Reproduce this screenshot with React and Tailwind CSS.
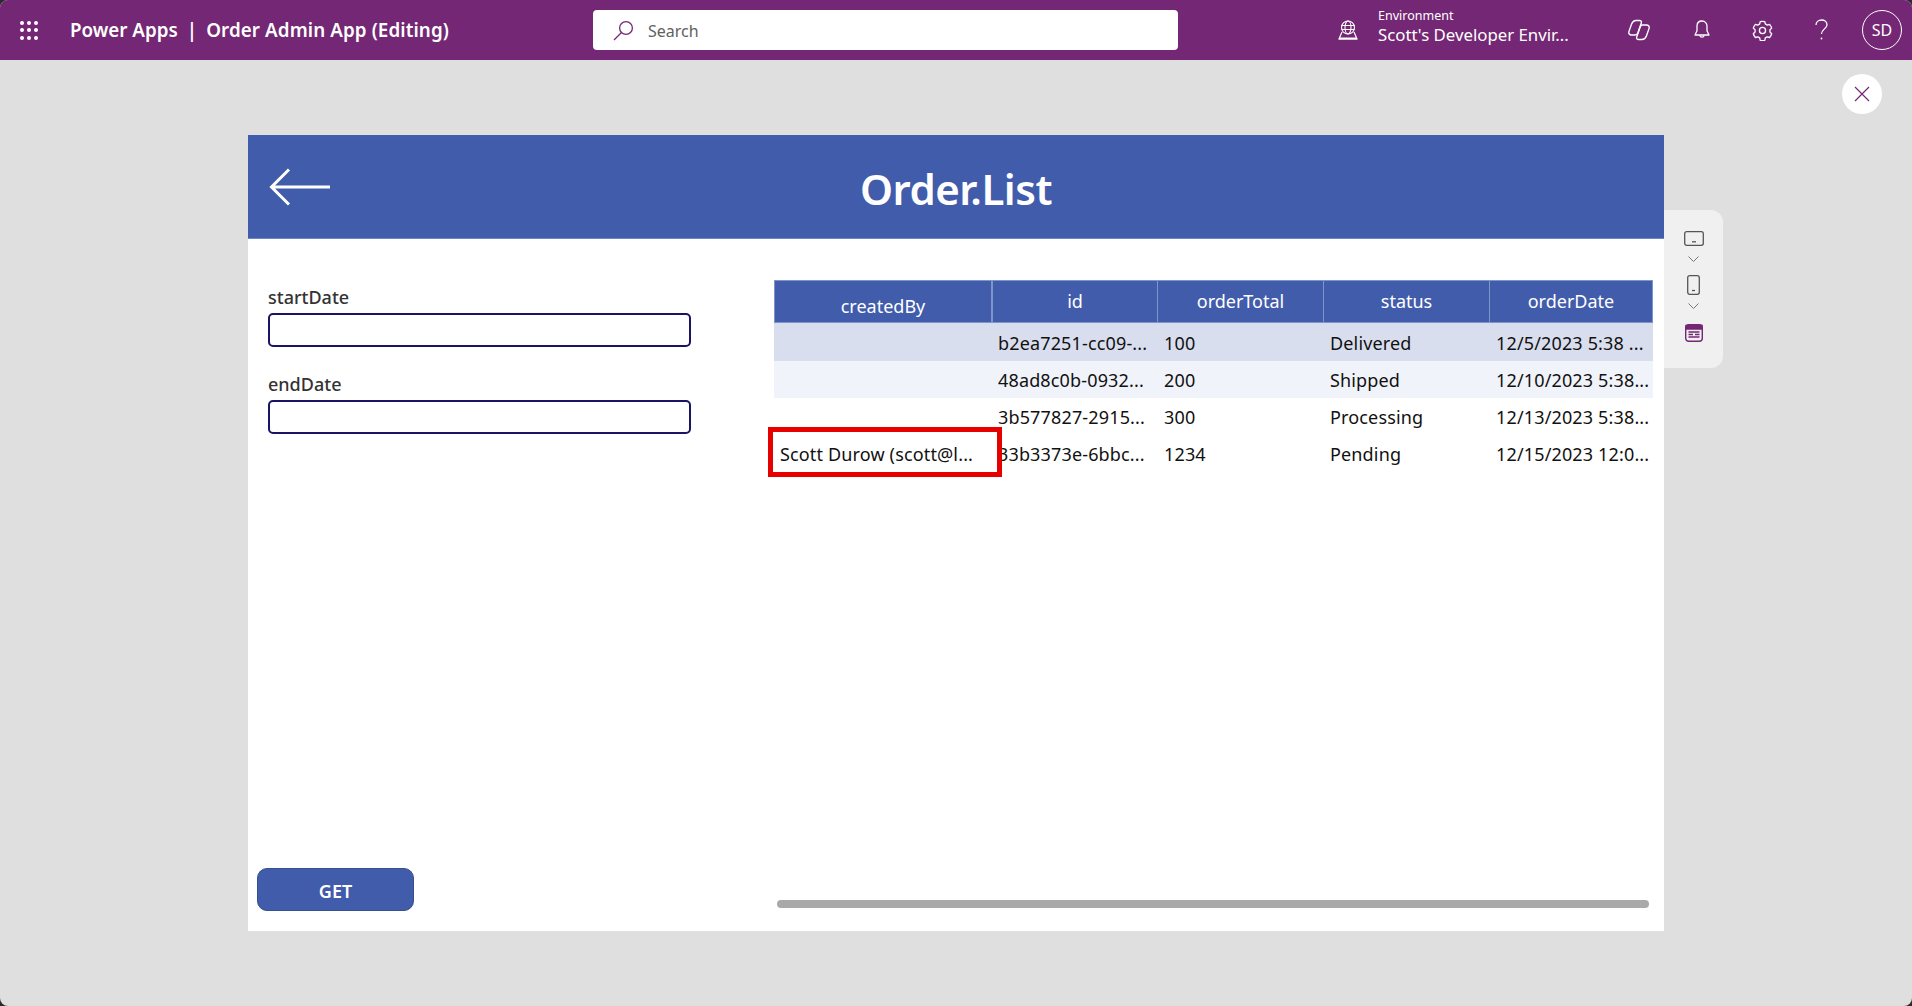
import React from 'react';

const font = { fontFamily: '"Noto Sans", sans-serif' };

const rows = [
    { createdBy: '', id: 'b2ea7251-cc09-...', total: '100', status: 'Delivered', date: '12/5/2023 5:38 ...', bg: 'bg-[#d9deee]', height: 'h-[38px] pt-[2px]' },
    { createdBy: '', id: '48ad8c0b-0932...', total: '200', status: 'Shipped', date: '12/10/2023 5:38...', bg: 'bg-[#f0f3f9]', height: 'h-[37px] pt-[2px]' },
    { createdBy: '', id: '3b577827-2915...', total: '300', status: 'Processing', date: '12/13/2023 5:38...', bg: 'bg-white', height: 'h-[37px] pt-[2px]' },
    { createdBy: 'Scott Durow (scott@l...', id: '33b3373e-6bbc...', total: '1234', status: 'Pending', date: '12/15/2023 12:0...', bg: 'bg-white', height: 'h-[37px] pt-[2px]' },
];

const WaffleIcon = () => (
    <div className="grid grid-cols-3 gap-[3.5px] w-[18px]">
        {Array.from({ length: 9 }).map((_, i) => (
            <span key={i} className="w-[4px] h-[4px] rounded-full bg-white"></span>
        ))}
    </div>
);

const SearchIcon = () => (
    <svg width="21" height="21" viewBox="0 0 21 21" fill="none" stroke="#742774" strokeWidth="1.3">
        <circle cx="13" cy="8" r="6.4" />
        <path d="M8.5 12.5 1 20" />
    </svg>
);

const GlobeIcon = () => (
    <svg width="20" height="20" viewBox="0 0 20 20" fill="none" stroke="white" strokeWidth="1.1">
        <circle cx="10" cy="7.5" r="6.5" />
        <ellipse cx="10" cy="7.5" rx="3" ry="6.5" />
        <path d="M3.5 5.5h13M3.5 9.5h13" />
        <path d="M4 12 1 19h18l-3-7" strokeWidth="1.2" />
        <path d="M1 18.5h18" strokeWidth="2" />
    </svg>
);

const CopilotIcon = () => (
    <svg width="24" height="24" viewBox="0 0 24 24" fill="none" stroke="white" strokeWidth="1.4" strokeLinejoin="round">
        <path d="M9 2.5h3.5c1.5 0 2.3 1 1.8 2.4L10.8 15c-.5 1.3-1.4 2-2.8 2H4.5c-2 0-3.2-1.6-2.6-3.4L4.6 6C5.5 3.8 7 2.5 9 2.5Z" />
        <path d="M15 7h4.5c2 0 3.2 1.6 2.6 3.4L19.4 18c-.9 2.2-2.4 3.5-4.4 3.5h-3.5c-1.5 0-2.3-1-1.8-2.4L13.2 9c.5-1.3.8-2 1.8-2Z" />
    </svg>
);

const BellIcon = () => (
    <svg width="16" height="20" viewBox="0 0 16 20" fill="none" stroke="white" strokeWidth="1.3">
        <path d="M8 1C4.8 1 3 3.4 3 6.3v4.4L1 15h14l-2-4.3V6.3C13 3.4 11.2 1 8 1Z" strokeLinejoin="round" />
        <path d="M5.8 15.5a2.3 2.3 0 0 0 4.4 0" />
    </svg>
);

const GearIcon = () => (
    <svg width="21" height="21" viewBox="0 0 24 24" fill="none" stroke="white" strokeWidth="1.5" strokeLinejoin="round">
        <path d="M12 1.5c.9 0 1.8.1 2.6.3l.6 2.7 2.3 1.3 2.6-.8c1.1 1.2 2 2.7 2.4 4.3l-2 1.9v2.6l2 1.9c-.5 1.6-1.3 3.1-2.4 4.3l-2.6-.8-2.3 1.3-.6 2.7c-1.7.4-3.5.4-5.2 0l-.6-2.7-2.3-1.3-2.6.8c-1.1-1.2-2-2.7-2.4-4.3l2-1.9v-2.6l-2-1.9c.5-1.6 1.3-3.1 2.4-4.3l2.6.8 2.3-1.3.6-2.7c.8-.2 1.7-.3 2.6-.3Z" />
        <circle cx="12" cy="12" r="3.5" />
    </svg>
);

const HelpIcon = () => (
    <svg width="13" height="22" viewBox="0 0 13 22" fill="none" stroke="white" strokeWidth="1.3">
        <path d="M1 6c0-3 2.4-5 5.5-5S12 3 12 5.7c0 4-5.5 4.500-5.500 9.300" />
        <circle cx="6.5" cy="19.5" r=".9" fill="white" stroke="none" />
    </svg>
);

const TabletIcon = () => (
    <svg width="20" height="15" viewBox="0 0 20 15" fill="none" stroke="#555" strokeWidth="1.3" className="shrink-0">
        <rect x=".7" y=".7" width="18.6" height="13.6" rx="2" />
        <path d="M8 10.8h4" />
    </svg>
);

const PhoneIcon = () => (
    <svg width="13" height="20" viewBox="0 0 13 20" fill="none" stroke="#555" strokeWidth="1.3" className="shrink-0">
        <rect x=".7" y=".7" width="11.6" height="18.6" rx="2" />
        <path d="M5 15.5h3" />
    </svg>
);

const ToolbarChevron = ({ className }) => (
    <svg width="11" height="6" viewBox="0 0 11 6" fill="none" stroke="#777" strokeWidth="1" className={className}>
        <path d="M.5.5l5 5 5-5" />
    </svg>
);

const ScreenIcon = () => (
    <svg width="18" height="18" viewBox="0 0 18 18" fill="none" stroke="#742774" strokeWidth="1.4" className="mt-[15px]">
        <rect x=".7" y=".7" width="16.6" height="16.6" rx="3" />
        <path d="M1 1.5h16V5H1z" fill="#742774" />
        <path d="M3.5 8h11M3.5 10.5H8M10 10.5h4.5M3.5 13h11" />
    </svg>
);

const Field = ({ label, className }) => (
    <div className={className}>
        <div className="text-[18px] leading-[24px] font-medium text-[#333] -mt-[1px]">{label}</div>
        <div className="w-[423px] h-[34px] mt-[4px] bg-white border-2 border-[#1b1464] rounded-[5px]"></div>
    </div>
);

const App = () => {
    return (
        <div className="bg-[#2b2b2b] h-[1006px]" style={font}>
            <div className="relative h-full rounded-lg overflow-hidden bg-[#dfdfdf] flex flex-col">
                <header className="h-[60px] shrink-0 bg-[#742774] flex items-center text-white">
                    <div className="w-[70px] pl-[20px]"><WaffleIcon /></div>
                    <div className="w-[523px] flex items-center text-[18.8px] font-semibold whitespace-pre pt-[1px]">
                        <span>Power Apps</span>
                        <span className="mx-[9px]">|</span>
                        <span className="tracking-[0.1px]">Order Admin App (Editing)</span>
                    </div>
                    <div className="w-[585px] h-[40px] bg-white rounded-[4px] flex items-center pl-[20px] gap-[14px]">
                        <SearchIcon />
                        <span className="text-[16px] text-[#616161] pt-[2px]">Search</span>
                    </div>
                    <div className="w-[180px] flex justify-end"><GlobeIcon /></div>
                    <div className="ml-[20px] w-[241px] pb-[5px] flex flex-col">
                        <span className="text-[12.5px] leading-[15px]">Environment</span>
                        <span className="text-[16.8px] leading-[24px] whitespace-nowrap">Scott's Developer Envir...</span>
                    </div>
                    <div className="w-[40px] flex justify-center"><CopilotIcon /></div>
                    <div className="w-[60px] ml-[13px] flex justify-center"><BellIcon /></div>
                    <div className="w-[60px] flex justify-center"><GearIcon /></div>
                    <div className="w-[58px] flex justify-center"><HelpIcon /></div>
                    <div className="w-[40px] h-[40px] ml-[12px] rounded-full border border-white flex items-center justify-center text-[16px]">SD</div>
                </header>

                <div className="flex items-start mt-[75px] ml-[248px]">
                    <main className="w-[1416px] h-[796px] shrink-0 bg-white flex flex-col">
                        <div className="h-[104px] shrink-0 bg-[#415cab] border-b border-[#6f86c4] flex items-center">
                            <svg className="ml-[21px] mt-[1px]" width="62" height="38" viewBox="0 0 62 38" fill="none" stroke="white" strokeWidth="3">
                                <path d="M61 19H3M20 1.5 2.5 19 20 36.5" />
                            </svg>
                            <h1 className="flex-1 text-center text-[42px] leading-none font-semibold text-white pr-[83px] pt-[5px] tracking-[-0.5px]">Order.List</h1>
                        </div>
                        <div className="flex-1 flex">
                            <div className="w-[526px] shrink-0 flex flex-col pt-[47px] pb-[20px]">
                                <Field label="startDate" className="ml-[20px]" />
                                <Field label="endDate" className="ml-[20px] mt-[26px]" />
                                <button className="mt-auto ml-[9px] w-[157px] h-[43px] pt-[4px] bg-[#415cab] border border-[#35508f] rounded-[10px] text-white text-[18px] font-semibold">GET</button>
                            </div>
                            <div className="flex-1 flex flex-col pt-[41px] pb-[23px] pr-[11px]">
                                <div className="relative">
                                    <div className="grid grid-cols-[218px_165px_166px_166px_162px] h-[43px] bg-[#415cab] text-white text-[18px] border border-[#8094cc]">
                                        <div className="flex items-center justify-center pt-[9px] border-r-2 border-[#8094cc]">createdBy</div>
                                        <div className="flex items-center justify-center border-r border-[#8094cc]">id</div>
                                        <div className="flex items-center justify-center border-r border-[#8094cc]">orderTotal</div>
                                        <div className="flex items-center justify-center border-r border-[#8094cc]">status</div>
                                        <div className="flex items-center justify-center">orderDate</div>
                                    </div>
                                    {rows.map((row) => (
                                        <div key={row.id} className={`grid grid-cols-[218px_165px_166px_166px_164px] items-center text-[18px] tracking-[0.15px] text-[#111] whitespace-nowrap ${row.bg} ${row.height}`}>
                                            <div className="pl-[6px]">{row.createdBy}</div>
                                            <div className="pl-[6px] overflow-hidden">{row.id}</div>
                                            <div className="pl-[7px]">{row.total}</div>
                                            <div className="pl-[7px]">{row.status}</div>
                                            <div className="pl-[7px] overflow-hidden">{row.date}</div>
                                        </div>
                                    ))}
                                    {/* red highlight drawn over the grid */}
                                    <div className="absolute left-[-6px] top-[147px] w-[234px] h-[50px] border-[5px] border-[#e60000]"></div>
                                </div>
                                <div className="mt-auto ml-[3px] w-[872px] h-[8px] rounded-full bg-[#a9a9a9]"></div>
                            </div>
                        </div>
                    </main>
                    <aside className="w-[59px] h-[158px] mt-[75px] bg-[#f0f0f0] rounded-r-xl flex flex-col items-center pt-[21px]">
                        <TabletIcon />
                        <ToolbarChevron className="mt-[10px]" />
                        <div className="mt-[13px]"><PhoneIcon /></div>
                        <ToolbarChevron className="mt-[8px]" />
                        <ScreenIcon />
                    </aside>
                </div>

                <button className="absolute top-[74px] right-[30px] w-[40px] h-[40px] rounded-full bg-white flex items-center justify-center">
                    <svg width="16" height="16" viewBox="0 0 16 16" fill="none" stroke="#742774" strokeWidth="1.2">
                        <path d="M1 1l14 14M15 1 1 15" />
                    </svg>
                </button>
            </div>
        </div>
    );
};

export default App;
